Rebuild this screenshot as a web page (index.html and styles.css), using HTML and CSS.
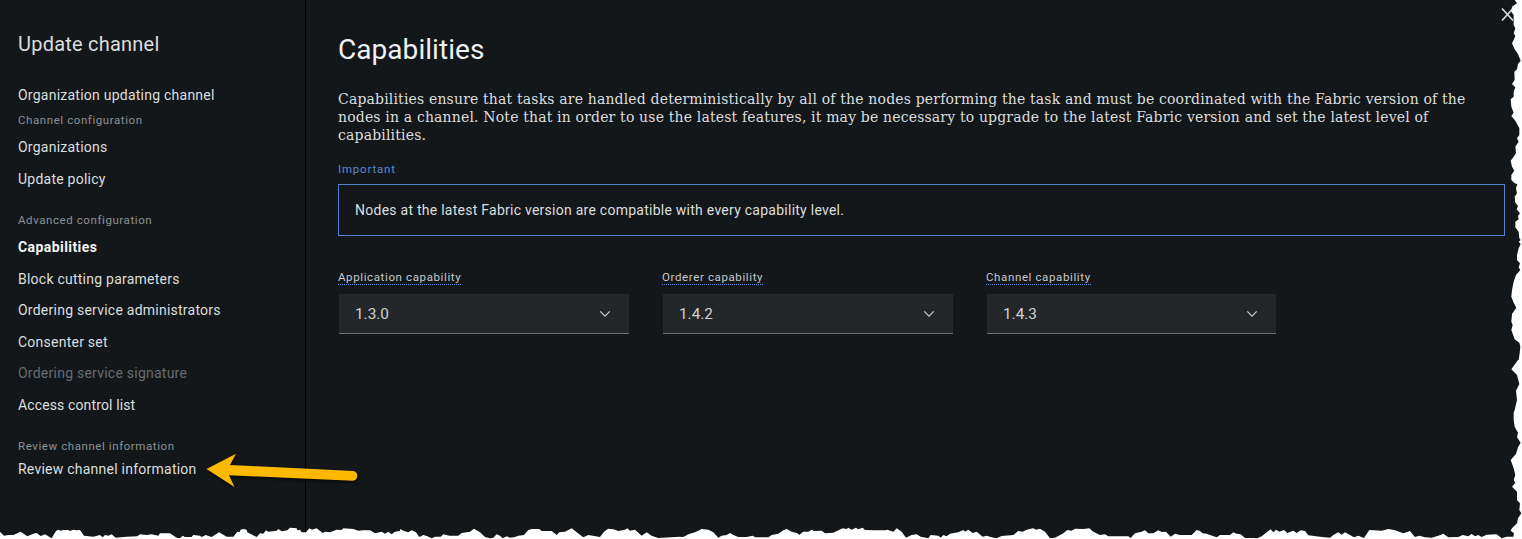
FILE: index.html
```html
<!DOCTYPE html>
<html lang="en">
<head>
<meta charset="utf-8">
<title>Update channel</title>
<link rel="stylesheet" href="styles.css">
</head>
<body>
<div class="page">
<aside class="sidebar">
<h2 class="side-title">Update channel</h2>
<a class="item first">Organization updating channel</a>
<div class="group g1">Channel configuration</div>
<a class="item">Organizations</a>
<a class="item">Update policy</a>
<div class="group">Advanced configuration</div>
<a class="item active">Capabilities</a>
<a class="item">Block cutting parameters</a>
<a class="item">Ordering service administrators</a>
<a class="item">Consenter set</a>
<a class="item disabled">Ordering service signature</a>
<a class="item acl">Access control list</a>
<div class="group">Review channel information</div>
<a class="item last">Review channel information</a>
</aside>
<main class="main">
<h1 class="heading">Capabilities</h1>
<p class="intro">Capabilities ensure that tasks are handled deterministically by all of the nodes performing the task and must be coordinated with the Fabric version of the<br>nodes in a channel. Note that in order to use the latest features, it may be necessary to upgrade to the latest Fabric version and set the latest level of<br>capabilities.</p>
<div class="important">Important</div>
<div class="note">Nodes at the latest Fabric version are compatible with every capability level.</div>
<div class="fields">
<div class="field"><label class="label"><span>Application capability</span></label><div class="select">1.3.0<svg class="chevron" viewBox="0 0 12 8"><path d="M1.3 1.4 6 6.1 10.7 1.4"/></svg></div></div>
<div class="field"><label class="label"><span>Orderer capability</span></label><div class="select">1.4.2<svg class="chevron" viewBox="0 0 12 8"><path d="M1.3 1.4 6 6.1 10.7 1.4"/></svg></div></div>
<div class="field narrow"><label class="label"><span>Channel capability</span></label><div class="select">1.4.3<svg class="chevron" viewBox="0 0 12 8"><path d="M1.3 1.4 6 6.1 10.7 1.4"/></svg></div></div>
</div>
</main>
<svg class="overlay" viewBox="0 0 1522 539">
<path class="close" d="M1502 8.5 1513 20.5M1513 8.5 1502 20.5"/>
<path class="arrow" d="M206.5 469 236 453.7 230 465 353.5 471A5 5 0 0 1 353 480.8L229 475.3 234.5 487Z"/>
<g class="torn">
<g transform="translate(0 515) scale(.33333)"><path d="M0 50 12 62 25 60 40 60 62 50 82 64 100 56 110 54 122 63 135 58 155 70 168 48 175 44 182 47 190 45 205 45 210 48 220 44 230 46 240 45 252 62 280 65 300 60 308 67 315 60 325 62 335 58 347 68 380 65 412 64 420 58 440 60 455 58 475 62 480 55 510 55 530 68 540 70 548 62 555 66 575 66 580 60 600 62 605 66 617 60 635 66 657 52 680 65 700 65 712 50 718 52 722 44 730 42 740 44 742 52 770 66 780 55 790 56 798 46 805 50 830 47 835 42 845 49 862 46 870 38 890 40 892 46 900 44 905 52 918 52 928 40 936 44 950 40 968 54 975 50 990 52 1010 44 1025 45 1030 40 1060 42 1075 47 1090 46 1110 46 1125 55 1145 50 1155 56 1165 50 1175 58 1185 50 1200 48V75H0Z"/></g>
<g transform="translate(400 515) scale(.33333)"><path d="M0 42 12 48 25 52 35 46 48 52 58 66 70 60 82 64 95 70 105 65 122 65 130 58 148 62 175 62 185 54 210 50 222 41 240 52 255 66 270 70 280 68 290 58 300 62 308 70 320 64 330 68 345 66 355 62 372 60 385 45 395 42 418 42 425 48 455 48 470 60 478 52 495 50 515 40 530 52 550 67 565 60 600 66 612 50 625 41 640 43 655 48 675 44 682 40 690 47 705 44 725 62 740 52 755 62 775 69 815 67 838 65 850 66 865 58 885 52 905 42 925 44 940 52 955 68 965 62 980 60 990 54 1000 60 1015 66 1040 66 1058 62 1066 67 1105 67 1115 60 1135 56 1150 46 1160 42 1175 50 1190 54 1200 60V75H0Z"/></g>
<g transform="translate(800 515) scale(.33333)"><path d="M0 58 10 50 25 50 35 44 42 48 65 47 75 55 100 53 128 40 140 42 145 38 155 44 168 38 175 43 188 38 195 45 225 46 255 46 262 44 280 50 290 40 305 50 318 68 335 60 350 58 362 65 385 70 392 60 415 62 422 68 430 60 440 64 450 56 475 52 490 45 495 50 505 44 518 54 530 50 548 65 560 62 575 67 590 70 605 63 640 60 655 48 668 50 680 44 700 40 708 44 720 41 735 50 750 70 765 68 790 55 802 45 815 47 825 41 850 42 868 40 880 50 900 60 915 58 925 64 985 64 992 69 1005 55 1025 50 1035 46 1045 55 1060 55 1075 46 1085 51 1098 50 1112 65 1125 56 1140 60 1175 60 1190 45 1200 48V75H0Z"/></g>
<g transform="translate(1180 515) scale(.33333)"><path d="M60 48 68 55 80 56 90 60 110 67 120 60 150 60 160 52 170 56 182 58 195 69 220 69 232 70 245 64 262 50 272 43 280 52 288 44 298 50 312 45 322 54 340 47 350 54 362 46 375 48 385 61 420 65 450 68 460 60 475 52 485 59 495 52 510 60 522 67 535 62 552 69 568 45 605 47 625 42 645 46 670 55 690 48 705 66 718 62 735 67 755 68 775 62 790 56 805 67 835 66 848 60 865 64 875 57 885 64 895 60 905 66 920 59 950 58 965 70 980 65 1000 65 1002 55 1030 40V75H60Z"/></g>
<path transform="translate(1462) scale(.33333)" d="M158 0 165 10 150 20 148 35 155 45 155 75 160 85 155 100 160 108 155 120 150 130 158 148 168 162 176 182 168 192 165 208 157 215 158 240 150 252 160 262 155 275 155 290 146 298 148 320 155 338 148 348 160 362 172 385 172 405 165 415 170 425 160 440 162 460 155 470 146 482 150 500 157 512 148 525 148 540H185V0Z"/>
<path transform="translate(1462 180) scale(.33333)" d="M148 0 158 10 166 12 162 25 165 40 158 50 160 68 168 78 164 88 174 100 168 108 170 118 160 125 160 142 170 155 172 175 176 180 170 185 176 192 170 205 165 225 165 240 174 250 170 262 175 270 162 285 155 305 150 330 148 350 155 368 163 383 150 402 148 425 152 435 148 450 158 478 172 488 175 500 173 520 170 540H185V0Z"/>
<path transform="translate(1462 360) scale(.33333)" d="M168 0 148 28 165 45 172 72 162 92 165 120 158 150 155 158 155 180 158 200 168 218 165 232 176 248 168 262 162 282 146 300 155 325 160 345 155 360 160 368 150 380 165 395 165 420 174 430 172 450 178 460 168 475 165 490 150 505 146 512 156 520 156 540H185V0Z"/>
</g>
</svg>
</div>
</body>
</html>
```
FILE: styles.css
```css
*{box-sizing:border-box}
body{margin:0;background:#13171a;font-family:Roboto,sans-serif;color:#dcdedf}
.page{position:relative;display:flex;width:1522px;height:539px;overflow:hidden}
.sidebar{width:306px;flex:none;border-right:1px solid #000;padding:30px 0 0 18px;display:flex;flex-direction:column}
.side-title{margin:0;font-size:20px;font-weight:400;line-height:28px;letter-spacing:.22px}
.item{height:31.6px;line-height:31.6px;font-size:14px;flex:none;letter-spacing:.24px}
.item.first{margin-top:22.2px}
.item.last{margin-top:-3.6px}
.item.acl{letter-spacing:.13px}
.group{font-size:11.5px;line-height:14px;letter-spacing:.58px;margin:17.4px 0 5.2px;color:#8d9194}
.group.g1{margin-top:1.2px}
.item.active{font-weight:700;color:#f3f4f5;letter-spacing:.43px}
.item.disabled{color:#666b70}
.main{padding:34px 0 0 32px}
.heading{margin:0;font-size:28px;line-height:32px;font-weight:400;letter-spacing:.05px;color:#f0f1f2}
.intro{margin:24px 0 0;font-family:"DejaVu Serif",serif;font-size:14px;line-height:18px;letter-spacing:.168px;white-space:nowrap}
.important{margin-top:17px;font-size:11.5px;line-height:16px;letter-spacing:.8px;color:#5b88d2}
.note{margin-top:7px;width:1167px;height:52px;border:1px solid #5582cf;padding-left:16px;line-height:50px;font-size:14px;letter-spacing:.255px}
.fields{display:flex;gap:33px;margin-top:33px}
.field{width:291px}
.field.narrow{width:290px}
.label{display:block;height:16px;font-size:11.5px;line-height:16px;letter-spacing:.62px;color:#c6c9cb}
.label span{display:inline-block;height:16px;border-bottom:1px dotted #5f8ee0}
.select{display:flex;justify-content:space-between;align-items:center;height:40px;margin:9px 0 0 1px;background:#23272a;border-bottom:1px solid #6a6e71;padding:0 18px 0 16px;font-size:15.3px;color:#d0d2d4}
.chevron{width:12px;height:8px;fill:none;stroke:#c8cacb;stroke-width:1.3}
/* Close button, pointer arrow and torn paper edge lie over the panel */
.overlay{position:absolute;inset:0;width:1522px;height:539px;pointer-events:none}
.close{fill:none;stroke:#d8dadb;stroke-width:1.7}
.arrow{fill:#fdb900;filter:drop-shadow(1px 2px 1.5px #0009)}
.torn{fill:#fff}
```
